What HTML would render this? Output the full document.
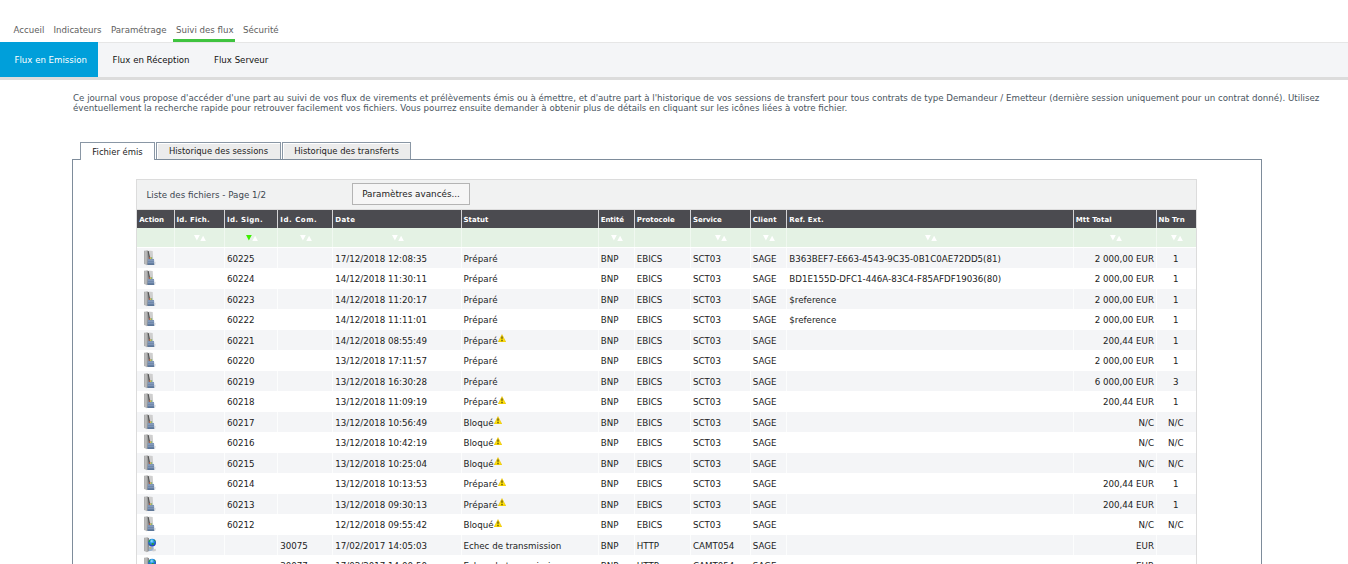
<!DOCTYPE html>
<html lang="fr"><head><meta charset="utf-8"><title>Suivi des flux</title>
<style>
html,body{margin:0;padding:0;background:#fff;}
body{width:1348px;height:564px;overflow:hidden;position:relative;font-family:"DejaVu Sans","Liberation Sans",sans-serif;font-size:8.7px;color:#222;}
#nav{position:absolute;left:0;top:0;width:1348px;height:42px;}
#nav a{position:absolute;top:24px;font-size:8.65px;color:#5e5e5e;line-height:12px;white-space:nowrap;}
#nav .ul{position:absolute;left:173px;top:39px;width:61.6px;height:3px;background:#3fc33f;}
#sub{position:absolute;left:0;top:42px;width:1348px;height:34.5px;background:#f4f5f7;border-bottom:3px solid #dcdcdc;box-shadow:inset 0 1px 0 #e6e6e6;}
#sub .act{position:absolute;left:0;top:0;width:98px;height:34.5px;background:#009fda;}
#sub a{position:absolute;top:12px;font-size:8.62px;line-height:12px;color:#111;white-space:nowrap;}
#sub a.w{color:#fff;}
#intro{position:absolute;left:73px;top:93px;width:1270px;font-size:8.685px;line-height:10px;color:#4a5560;white-space:nowrap;}
.tab{position:absolute;top:142px;height:17px;box-sizing:border-box;border:1px solid #8a97a5;border-bottom:none;background:#ececec;font-size:8.45px;line-height:17.5px;text-align:center;color:#222;white-space:nowrap;box-shadow:inset 1px 1px 0 #fff;}
.tab.on{background:#fff;height:18px;z-index:2;line-height:18px;}
#panel{position:absolute;left:72px;top:159px;width:1190px;height:420px;box-sizing:border-box;border:1px solid #7e8c9b;background:#fff;}
#grid{position:absolute;left:136px;top:179px;width:1061px;height:400px;box-sizing:border-box;border:1px solid #dcdcdc;background:#fff;}
#gbar{position:absolute;left:0;top:0;width:1059px;height:28.5px;background:#f1f2f2;border-bottom:1px solid #dcdcdc;}
#gtitle{position:absolute;left:9.5px;top:9px;font-size:8.7px;line-height:12px;color:#3c4650;white-space:nowrap;}
#btn{position:absolute;left:215px;top:3px;width:118px;height:21.5px;box-sizing:border-box;border:1px solid #b4b4b4;background:#f6f6f6;font-size:8.8px;line-height:20px;text-align:center;color:#222;white-space:nowrap;}
.row{position:absolute;left:0;width:1058.5px;overflow:hidden;}
.c{position:absolute;top:0;height:100%;box-sizing:border-box;padding-left:1.9px;overflow:hidden;white-space:nowrap;border-left:1px solid rgba(255,255,255,.75);}
.row.h{background:#4b4b50;color:#fff;font-size:7px;font-weight:bold;line-height:20.4px;}
.row.h .c{border-left:1.5px solid #d4d4d6;padding-left:1.9px;}
.row.h .c:first-child{padding-left:2px;}
.row.h .c:first-child{border-left:none;}
.row.f{background:#e4f2e4;}
.row.f .c{text-align:center;padding:0;border-left:1.5px solid #f0f8f0;}
.row.f .c:first-child{border-left:none;}
.row.o{background:#f4f5f7;line-height:22.5px;}
.row.e{background:#fff;line-height:22.5px;}
.c.a{padding-left:6.3px;border-left:none;}
.c.r{text-align:right;padding-right:1.6px;}
.c.m{text-align:center;padding-left:0;padding-right:1px;}
.ic{display:block;margin-top:2.25px;}
.wn{display:inline-block;vertical-align:1.6px;margin-left:0.3px;}
.so{display:block;margin:7px auto 0;position:relative;left:0.9px;}
</style></head><body>
<svg width="0" height="0" style="position:absolute"><defs>
<linearGradient id="tw" x1="0" x2="1" y1="0" y2="0"><stop offset="0" stop-color="#7a7a7a"/><stop offset="0.3" stop-color="#c6c6c6"/><stop offset="0.7" stop-color="#a2a2a2"/><stop offset="1" stop-color="#6a6a6a"/></linearGradient>
<linearGradient id="bx" x1="0" x2="0" y1="0" y2="1"><stop offset="0" stop-color="#7f97b8"/><stop offset="1" stop-color="#5a7496"/></linearGradient>
<radialGradient id="gl" cx="0.45" cy="0.3" r="0.7"><stop offset="0" stop-color="#9fe8ff"/><stop offset="0.35" stop-color="#2f9be8"/><stop offset="1" stop-color="#1a2fb8"/></radialGradient>
<symbol id="doc" viewBox="0 0 12 16"><path d="M0.4 0.7 L3.2 0.3 L4.7 1.2 L4.7 14.1 L2.7 15.3 L0.4 13.9Z" fill="url(#tw)"/><path d="M4.5 0.6 L8.7 0.9 L9.2 9.2 L6.4 9.2Z" fill="#cfcfcf"/><path d="M3.7 1.3 L4.7 1.1 L6.4 8.4 L4.9 9.2Z" fill="#555"/><path d="M3.7 9.1 L10 9.1 L10.4 15 L3.4 15Z" fill="url(#bx)"/><rect x="5.2" y="7" width="1.2" height="1.9" fill="#c8604a" opacity=".85"/><rect x="6.2" y="7.6" width="1.2" height="1.5" fill="#e2c23e" opacity=".9"/><rect x="7.2" y="7.2" width="1" height="1.7" fill="#62a856" opacity=".85"/><path d="M4 10.6 H10.1 M3.8 12.6 H10.3" stroke="#8ea5c4" stroke-width="0.6"/><path d="M10.4 13.4 L11.8 11.6 L11.2 14.6Z" fill="#d0d0d0"/></symbol>
<symbol id="web" viewBox="0 0 12 16"><path d="M0.4 0.7 L3.2 0.3 L4.9 1.2 L4.9 14.1 L2.7 15.3 L0.4 13.9Z" fill="url(#tw)"/><path d="M4.6 9.6 L9.4 9.6 L10 13.6 L4.6 14.2Z" fill="#9ab0cc"/><rect x="5.6" y="10.2" width="1.6" height="1.6" fill="#d8b84a"/><path d="M8.6 12.4 L11.8 11.8 L11.8 14 L8.6 14.4Z" fill="#cfcfcf"/><circle cx="8.1" cy="5.6" r="3.9" fill="url(#gl)"/><path d="M4.6 4.2 Q5.4 2.6 6.6 2.6 Q6.2 4.6 5 6Z M7.6 6.2 Q9.6 5.6 10.2 7 Q9.2 8.6 7.8 7.8Z M10 2.4 Q11.6 3.2 11.8 4.8 Q10.6 4.4 9.8 3Z M4.8 7 Q5.8 7.2 6.2 8.6 Q5.2 8.2 4.8 7Z" fill="#25a035"/></symbol>
<symbol id="wn" viewBox="0 -0.3 8 8"><path d="M4 0.3 L7.8 7.6 L0.2 7.6Z" fill="#ffe20a" stroke="#e0b400" stroke-width="0.5" stroke-linejoin="round"/><path d="M3.45 2.3 H4.55 L4.3 5.3 H3.7Z M3.5 5.8 H4.5 V6.9 H3.5Z" fill="#1e1a05"/></symbol>
<symbol id="so" viewBox="0 0 12 6.4"><path d="M0 0 H5.8 L2.9 5.6Z" fill="#fff"/><path d="M6.2 6.2 H12 L9.1 0.8Z" fill="#fff"/></symbol>
<symbol id="sg" viewBox="0 0 12 6.4"><path d="M0 0 H5.8 L2.9 5.6Z" fill="#3df000"/><path d="M6.2 6.2 H12 L9.1 0.8Z" fill="#fff"/></symbol>
</defs></svg>
<div id="nav">
<a style="left:13.5px">Accueil</a><a style="left:53.5px">Indicateurs</a><a style="left:111px">Paramétrage</a><a style="left:176px">Suivi des flux</a><a style="left:243px">Sécurité</a>
<div class="ul"></div>
</div>
<div id="sub"><div class="act"></div>
<a class="w" style="left:14.5px">Flux en Emission</a><a style="left:112.5px">Flux en Réception</a><a style="left:214px">Flux Serveur</a>
</div>
<div id="intro">Ce journal vous propose d'accéder d'une part au suivi de vos flux de virements et prélèvements émis ou à émettre, et d'autre part à l'historique de vos sessions de transfert pour tous contrats de type Demandeur / Emetteur (dernière session uniquement pour un contrat donné). Utilisez<br>éventuellement la recherche rapide pour retrouver facilement vos fichiers. Vous pourrez ensuite demander à obtenir plus de détails en cliquant sur les icônes liées à votre fichier.</div>
<div id="panel"></div>
<div class="tab on" style="left:80px;width:75px">Fichier émis</div>
<div class="tab" style="left:156px;width:125px">Historique des sessions</div>
<div class="tab" style="left:282px;width:129px">Historique des transferts</div>
<div id="grid">
<div id="gbar"><div id="gtitle">Liste des fichiers - Page 1/2</div>
<div id="btn">Paramètres avancés...</div></div>
<div class="row h" style="top:30px;height:17.9px"><span class="c " style="left:0.25px;width:36.35px"><b style="letter-spacing:-0.06px">Action</b></span><span class="c " style="left:36.6px;width:50.5px"><b style="letter-spacing:0.18px">Id. Fich.</b></span><span class="c " style="left:87.1px;width:53.25px"><b style="letter-spacing:0.35px">Id. Sign.</b></span><span class="c " style="left:140.35px;width:55px"><b style="letter-spacing:0.55px">Id. Com.</b></span><span class="c " style="left:195.35px;width:128.25px"><b style="letter-spacing:0.34px">Date</b></span><span class="c " style="left:323.6px;width:137.25px"><b style="letter-spacing:0.03px">Statut</b></span><span class="c " style="left:460.85px;width:36px"><b style="letter-spacing:-0.09px">Entité</b></span><span class="c " style="left:496.85px;width:56.25px"><b style="letter-spacing:0.04px">Protocole</b></span><span class="c " style="left:553.1px;width:59.75px"><b style="letter-spacing:-0.05px">Service</b></span><span class="c " style="left:612.85px;width:36.5px"><b style="letter-spacing:0.16px">Client</b></span><span class="c " style="left:649.35px;width:286.5px"><b style="letter-spacing:0.14px">Ref. Ext.</b></span><span class="c " style="left:935.85px;width:82.75px"><b style="letter-spacing:0.09px">Mtt Total</b></span><span class="c " style="left:1018.6px;width:40.4px"><b style="letter-spacing:0.08px">Nb Trn</b></span></div>
<div class="row f" style="top:47.9px;height:19.1px"><span class="c " style="left:0.25px;width:36.35px"></span><span class="c " style="left:36.6px;width:50.5px"><svg class="so" width="12" height="6.4"><use href="#so"/></svg></span><span class="c " style="left:87.1px;width:53.25px"><svg class="so" width="12" height="6.4"><use href="#sg"/></svg></span><span class="c " style="left:140.35px;width:55px"><svg class="so" width="12" height="6.4"><use href="#so"/></svg></span><span class="c " style="left:195.35px;width:128.25px"><svg class="so" width="12" height="6.4"><use href="#so"/></svg></span><span class="c " style="left:323.6px;width:137.25px"></span><span class="c " style="left:460.85px;width:36px"><svg class="so" width="12" height="6.4"><use href="#so"/></svg></span><span class="c " style="left:496.85px;width:56.25px"></span><span class="c " style="left:553.1px;width:59.75px"><svg class="so" width="12" height="6.4"><use href="#so"/></svg></span><span class="c " style="left:612.85px;width:36.5px"><svg class="so" width="12" height="6.4"><use href="#so"/></svg></span><span class="c " style="left:649.35px;width:286.5px"><svg class="so" width="12" height="6.4"><use href="#so"/></svg></span><span class="c " style="left:935.85px;width:82.75px"><svg class="so" width="12" height="6.4"><use href="#so"/></svg></span><span class="c " style="left:1018.6px;width:40.4px"><svg class="so" width="12" height="6.4"><use href="#so"/></svg></span></div>
<div class="row o" style="top:67.75px;height:20.49px"><span class="c a" style="left:0.25px;width:36.35px"><svg class="ic" width="12" height="16"><use href="#doc"/></svg></span><span class="c " style="left:36.6px;width:50.5px"></span><span class="c " style="left:87.1px;width:53.25px">60225</span><span class="c " style="left:140.35px;width:55px"></span><span class="c " style="left:195.35px;width:128.25px">17/12/2018 12:08:35</span><span class="c " style="left:323.6px;width:137.25px"><span style="letter-spacing:0.14px">Préparé</span></span><span class="c " style="left:460.85px;width:36px">BNP</span><span class="c " style="left:496.85px;width:56.25px">EBICS</span><span class="c " style="left:553.1px;width:59.75px">SCT03</span><span class="c " style="left:612.85px;width:36.5px">SAGE</span><span class="c " style="left:649.35px;width:286.5px">B363BEF7-E663-4543-9C35-0B1C0AE72DD5(81)</span><span class="c r" style="left:935.85px;width:82.75px">2 000,00 EUR</span><span class="c m" style="left:1018.6px;width:40.4px">1</span></div>
<div class="row e" style="top:88.24px;height:20.49px"><span class="c a" style="left:0.25px;width:36.35px"><svg class="ic" width="12" height="16"><use href="#doc"/></svg></span><span class="c " style="left:36.6px;width:50.5px"></span><span class="c " style="left:87.1px;width:53.25px">60224</span><span class="c " style="left:140.35px;width:55px"></span><span class="c " style="left:195.35px;width:128.25px">14/12/2018 11:30:11</span><span class="c " style="left:323.6px;width:137.25px"><span style="letter-spacing:0.14px">Préparé</span></span><span class="c " style="left:460.85px;width:36px">BNP</span><span class="c " style="left:496.85px;width:56.25px">EBICS</span><span class="c " style="left:553.1px;width:59.75px">SCT03</span><span class="c " style="left:612.85px;width:36.5px">SAGE</span><span class="c " style="left:649.35px;width:286.5px">BD1E155D-DFC1-446A-83C4-F85AFDF19036(80)</span><span class="c r" style="left:935.85px;width:82.75px">2 000,00 EUR</span><span class="c m" style="left:1018.6px;width:40.4px">1</span></div>
<div class="row o" style="top:108.73px;height:20.49px"><span class="c a" style="left:0.25px;width:36.35px"><svg class="ic" width="12" height="16"><use href="#doc"/></svg></span><span class="c " style="left:36.6px;width:50.5px"></span><span class="c " style="left:87.1px;width:53.25px">60223</span><span class="c " style="left:140.35px;width:55px"></span><span class="c " style="left:195.35px;width:128.25px">14/12/2018 11:20:17</span><span class="c " style="left:323.6px;width:137.25px"><span style="letter-spacing:0.14px">Préparé</span></span><span class="c " style="left:460.85px;width:36px">BNP</span><span class="c " style="left:496.85px;width:56.25px">EBICS</span><span class="c " style="left:553.1px;width:59.75px">SCT03</span><span class="c " style="left:612.85px;width:36.5px">SAGE</span><span class="c " style="left:649.35px;width:286.5px">$reference</span><span class="c r" style="left:935.85px;width:82.75px">2 000,00 EUR</span><span class="c m" style="left:1018.6px;width:40.4px">1</span></div>
<div class="row e" style="top:129.22px;height:20.49px"><span class="c a" style="left:0.25px;width:36.35px"><svg class="ic" width="12" height="16"><use href="#doc"/></svg></span><span class="c " style="left:36.6px;width:50.5px"></span><span class="c " style="left:87.1px;width:53.25px">60222</span><span class="c " style="left:140.35px;width:55px"></span><span class="c " style="left:195.35px;width:128.25px">14/12/2018 11:11:01</span><span class="c " style="left:323.6px;width:137.25px"><span style="letter-spacing:0.14px">Préparé</span></span><span class="c " style="left:460.85px;width:36px">BNP</span><span class="c " style="left:496.85px;width:56.25px">EBICS</span><span class="c " style="left:553.1px;width:59.75px">SCT03</span><span class="c " style="left:612.85px;width:36.5px">SAGE</span><span class="c " style="left:649.35px;width:286.5px">$reference</span><span class="c r" style="left:935.85px;width:82.75px">2 000,00 EUR</span><span class="c m" style="left:1018.6px;width:40.4px">1</span></div>
<div class="row o" style="top:149.71px;height:20.49px"><span class="c a" style="left:0.25px;width:36.35px"><svg class="ic" width="12" height="16"><use href="#doc"/></svg></span><span class="c " style="left:36.6px;width:50.5px"></span><span class="c " style="left:87.1px;width:53.25px">60221</span><span class="c " style="left:140.35px;width:55px"></span><span class="c " style="left:195.35px;width:128.25px">14/12/2018 08:55:49</span><span class="c " style="left:323.6px;width:137.25px"><span style="letter-spacing:0.14px">Préparé</span><svg class="wn" width="8" height="8"><use href="#wn"/></svg></span><span class="c " style="left:460.85px;width:36px">BNP</span><span class="c " style="left:496.85px;width:56.25px">EBICS</span><span class="c " style="left:553.1px;width:59.75px">SCT03</span><span class="c " style="left:612.85px;width:36.5px">SAGE</span><span class="c " style="left:649.35px;width:286.5px"></span><span class="c r" style="left:935.85px;width:82.75px">200,44 EUR</span><span class="c m" style="left:1018.6px;width:40.4px">1</span></div>
<div class="row e" style="top:170.20px;height:20.49px"><span class="c a" style="left:0.25px;width:36.35px"><svg class="ic" width="12" height="16"><use href="#doc"/></svg></span><span class="c " style="left:36.6px;width:50.5px"></span><span class="c " style="left:87.1px;width:53.25px">60220</span><span class="c " style="left:140.35px;width:55px"></span><span class="c " style="left:195.35px;width:128.25px">13/12/2018 17:11:57</span><span class="c " style="left:323.6px;width:137.25px"><span style="letter-spacing:0.14px">Préparé</span></span><span class="c " style="left:460.85px;width:36px">BNP</span><span class="c " style="left:496.85px;width:56.25px">EBICS</span><span class="c " style="left:553.1px;width:59.75px">SCT03</span><span class="c " style="left:612.85px;width:36.5px">SAGE</span><span class="c " style="left:649.35px;width:286.5px"></span><span class="c r" style="left:935.85px;width:82.75px">2 000,00 EUR</span><span class="c m" style="left:1018.6px;width:40.4px">1</span></div>
<div class="row o" style="top:190.69px;height:20.49px"><span class="c a" style="left:0.25px;width:36.35px"><svg class="ic" width="12" height="16"><use href="#doc"/></svg></span><span class="c " style="left:36.6px;width:50.5px"></span><span class="c " style="left:87.1px;width:53.25px">60219</span><span class="c " style="left:140.35px;width:55px"></span><span class="c " style="left:195.35px;width:128.25px">13/12/2018 16:30:28</span><span class="c " style="left:323.6px;width:137.25px"><span style="letter-spacing:0.14px">Préparé</span></span><span class="c " style="left:460.85px;width:36px">BNP</span><span class="c " style="left:496.85px;width:56.25px">EBICS</span><span class="c " style="left:553.1px;width:59.75px">SCT03</span><span class="c " style="left:612.85px;width:36.5px">SAGE</span><span class="c " style="left:649.35px;width:286.5px"></span><span class="c r" style="left:935.85px;width:82.75px">6 000,00 EUR</span><span class="c m" style="left:1018.6px;width:40.4px">3</span></div>
<div class="row e" style="top:211.18px;height:20.49px"><span class="c a" style="left:0.25px;width:36.35px"><svg class="ic" width="12" height="16"><use href="#doc"/></svg></span><span class="c " style="left:36.6px;width:50.5px"></span><span class="c " style="left:87.1px;width:53.25px">60218</span><span class="c " style="left:140.35px;width:55px"></span><span class="c " style="left:195.35px;width:128.25px">13/12/2018 11:09:19</span><span class="c " style="left:323.6px;width:137.25px"><span style="letter-spacing:0.14px">Préparé</span><svg class="wn" width="8" height="8"><use href="#wn"/></svg></span><span class="c " style="left:460.85px;width:36px">BNP</span><span class="c " style="left:496.85px;width:56.25px">EBICS</span><span class="c " style="left:553.1px;width:59.75px">SCT03</span><span class="c " style="left:612.85px;width:36.5px">SAGE</span><span class="c " style="left:649.35px;width:286.5px"></span><span class="c r" style="left:935.85px;width:82.75px">200,44 EUR</span><span class="c m" style="left:1018.6px;width:40.4px">1</span></div>
<div class="row o" style="top:231.67px;height:20.49px"><span class="c a" style="left:0.25px;width:36.35px"><svg class="ic" width="12" height="16"><use href="#doc"/></svg></span><span class="c " style="left:36.6px;width:50.5px"></span><span class="c " style="left:87.1px;width:53.25px">60217</span><span class="c " style="left:140.35px;width:55px"></span><span class="c " style="left:195.35px;width:128.25px">13/12/2018 10:56:49</span><span class="c " style="left:323.6px;width:137.25px">Bloqué<svg class="wn" width="8" height="8"><use href="#wn"/></svg></span><span class="c " style="left:460.85px;width:36px">BNP</span><span class="c " style="left:496.85px;width:56.25px">EBICS</span><span class="c " style="left:553.1px;width:59.75px">SCT03</span><span class="c " style="left:612.85px;width:36.5px">SAGE</span><span class="c " style="left:649.35px;width:286.5px"></span><span class="c r" style="left:935.85px;width:82.75px">N/C</span><span class="c m" style="left:1018.6px;width:40.4px">N/C</span></div>
<div class="row e" style="top:252.16px;height:20.49px"><span class="c a" style="left:0.25px;width:36.35px"><svg class="ic" width="12" height="16"><use href="#doc"/></svg></span><span class="c " style="left:36.6px;width:50.5px"></span><span class="c " style="left:87.1px;width:53.25px">60216</span><span class="c " style="left:140.35px;width:55px"></span><span class="c " style="left:195.35px;width:128.25px">13/12/2018 10:42:19</span><span class="c " style="left:323.6px;width:137.25px">Bloqué<svg class="wn" width="8" height="8"><use href="#wn"/></svg></span><span class="c " style="left:460.85px;width:36px">BNP</span><span class="c " style="left:496.85px;width:56.25px">EBICS</span><span class="c " style="left:553.1px;width:59.75px">SCT03</span><span class="c " style="left:612.85px;width:36.5px">SAGE</span><span class="c " style="left:649.35px;width:286.5px"></span><span class="c r" style="left:935.85px;width:82.75px">N/C</span><span class="c m" style="left:1018.6px;width:40.4px">N/C</span></div>
<div class="row o" style="top:272.65px;height:20.49px"><span class="c a" style="left:0.25px;width:36.35px"><svg class="ic" width="12" height="16"><use href="#doc"/></svg></span><span class="c " style="left:36.6px;width:50.5px"></span><span class="c " style="left:87.1px;width:53.25px">60215</span><span class="c " style="left:140.35px;width:55px"></span><span class="c " style="left:195.35px;width:128.25px">13/12/2018 10:25:04</span><span class="c " style="left:323.6px;width:137.25px">Bloqué<svg class="wn" width="8" height="8"><use href="#wn"/></svg></span><span class="c " style="left:460.85px;width:36px">BNP</span><span class="c " style="left:496.85px;width:56.25px">EBICS</span><span class="c " style="left:553.1px;width:59.75px">SCT03</span><span class="c " style="left:612.85px;width:36.5px">SAGE</span><span class="c " style="left:649.35px;width:286.5px"></span><span class="c r" style="left:935.85px;width:82.75px">N/C</span><span class="c m" style="left:1018.6px;width:40.4px">N/C</span></div>
<div class="row e" style="top:293.14px;height:20.49px"><span class="c a" style="left:0.25px;width:36.35px"><svg class="ic" width="12" height="16"><use href="#doc"/></svg></span><span class="c " style="left:36.6px;width:50.5px"></span><span class="c " style="left:87.1px;width:53.25px">60214</span><span class="c " style="left:140.35px;width:55px"></span><span class="c " style="left:195.35px;width:128.25px">13/12/2018 10:13:53</span><span class="c " style="left:323.6px;width:137.25px"><span style="letter-spacing:0.14px">Préparé</span><svg class="wn" width="8" height="8"><use href="#wn"/></svg></span><span class="c " style="left:460.85px;width:36px">BNP</span><span class="c " style="left:496.85px;width:56.25px">EBICS</span><span class="c " style="left:553.1px;width:59.75px">SCT03</span><span class="c " style="left:612.85px;width:36.5px">SAGE</span><span class="c " style="left:649.35px;width:286.5px"></span><span class="c r" style="left:935.85px;width:82.75px">200,44 EUR</span><span class="c m" style="left:1018.6px;width:40.4px">1</span></div>
<div class="row o" style="top:313.63px;height:20.49px"><span class="c a" style="left:0.25px;width:36.35px"><svg class="ic" width="12" height="16"><use href="#doc"/></svg></span><span class="c " style="left:36.6px;width:50.5px"></span><span class="c " style="left:87.1px;width:53.25px">60213</span><span class="c " style="left:140.35px;width:55px"></span><span class="c " style="left:195.35px;width:128.25px">13/12/2018 09:30:13</span><span class="c " style="left:323.6px;width:137.25px"><span style="letter-spacing:0.14px">Préparé</span><svg class="wn" width="8" height="8"><use href="#wn"/></svg></span><span class="c " style="left:460.85px;width:36px">BNP</span><span class="c " style="left:496.85px;width:56.25px">EBICS</span><span class="c " style="left:553.1px;width:59.75px">SCT03</span><span class="c " style="left:612.85px;width:36.5px">SAGE</span><span class="c " style="left:649.35px;width:286.5px"></span><span class="c r" style="left:935.85px;width:82.75px">200,44 EUR</span><span class="c m" style="left:1018.6px;width:40.4px">1</span></div>
<div class="row e" style="top:334.12px;height:20.49px"><span class="c a" style="left:0.25px;width:36.35px"><svg class="ic" width="12" height="16"><use href="#doc"/></svg></span><span class="c " style="left:36.6px;width:50.5px"></span><span class="c " style="left:87.1px;width:53.25px">60212</span><span class="c " style="left:140.35px;width:55px"></span><span class="c " style="left:195.35px;width:128.25px">12/12/2018 09:55:42</span><span class="c " style="left:323.6px;width:137.25px">Bloqué<svg class="wn" width="8" height="8"><use href="#wn"/></svg></span><span class="c " style="left:460.85px;width:36px">BNP</span><span class="c " style="left:496.85px;width:56.25px">EBICS</span><span class="c " style="left:553.1px;width:59.75px">SCT03</span><span class="c " style="left:612.85px;width:36.5px">SAGE</span><span class="c " style="left:649.35px;width:286.5px"></span><span class="c r" style="left:935.85px;width:82.75px">N/C</span><span class="c m" style="left:1018.6px;width:40.4px">N/C</span></div>
<div class="row o" style="top:354.61px;height:20.49px"><span class="c a" style="left:0.25px;width:36.35px"><svg class="ic" width="12" height="16"><use href="#web"/></svg></span><span class="c " style="left:36.6px;width:50.5px"></span><span class="c " style="left:87.1px;width:53.25px"></span><span class="c " style="left:140.35px;width:55px">30075</span><span class="c " style="left:195.35px;width:128.25px">17/02/2017 14:05:03</span><span class="c " style="left:323.6px;width:137.25px">Echec de transmission</span><span class="c " style="left:460.85px;width:36px">BNP</span><span class="c " style="left:496.85px;width:56.25px">HTTP</span><span class="c " style="left:553.1px;width:59.75px">CAMT054</span><span class="c " style="left:612.85px;width:36.5px">SAGE</span><span class="c " style="left:649.35px;width:286.5px"></span><span class="c r" style="left:935.85px;width:82.75px">EUR</span><span class="c m" style="left:1018.6px;width:40.4px"></span></div>
<div class="row e" style="top:375.10px;height:20.49px"><span class="c a" style="left:0.25px;width:36.35px"><svg class="ic" width="12" height="16"><use href="#web"/></svg></span><span class="c " style="left:36.6px;width:50.5px"></span><span class="c " style="left:87.1px;width:53.25px"></span><span class="c " style="left:140.35px;width:55px">30077</span><span class="c " style="left:195.35px;width:128.25px">17/02/2017 14:00:50</span><span class="c " style="left:323.6px;width:137.25px">Echec de transmission</span><span class="c " style="left:460.85px;width:36px">BNP</span><span class="c " style="left:496.85px;width:56.25px">HTTP</span><span class="c " style="left:553.1px;width:59.75px">CAMT054</span><span class="c " style="left:612.85px;width:36.5px">SAGE</span><span class="c " style="left:649.35px;width:286.5px"></span><span class="c r" style="left:935.85px;width:82.75px">EUR</span><span class="c m" style="left:1018.6px;width:40.4px"></span></div>
</div>
</body></html>
